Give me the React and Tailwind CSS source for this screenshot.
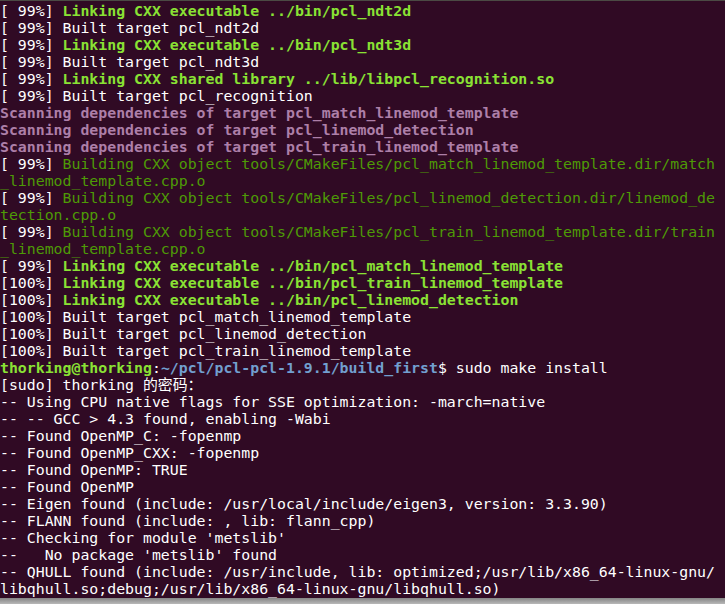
import React from "react";

const W = "text-[#ffffff]";
const G = "text-[#8ae234] font-bold";
const g = "text-[#4e9a06]";
const M = "text-[#ad7fa8] font-bold";
const B = "text-[#729fcf] font-bold";

const lines = [
  [["[ 99%] ", W], ["Linking CXX executable ../bin/pcl_ndt2d", G]],
  [["[ 99%] Built target pcl_ndt2d", W]],
  [["[ 99%] ", W], ["Linking CXX executable ../bin/pcl_ndt3d", G]],
  [["[ 99%] Built target pcl_ndt3d", W]],
  [["[ 99%] ", W], ["Linking CXX shared library ../lib/libpcl_recognition.so", G]],
  [["[ 99%] Built target pcl_recognition", W]],
  [["Scanning dependencies of target pcl_match_linemod_template", M]],
  [["Scanning dependencies of target pcl_linemod_detection", M]],
  [["Scanning dependencies of target pcl_train_linemod_template", M]],
  [["[ 99%] ", W], ["Building CXX object tools/CMakeFiles/pcl_match_linemod_template.dir/match", g]],
  [["_linemod_template.cpp.o", g]],
  [["[ 99%] ", W], ["Building CXX object tools/CMakeFiles/pcl_linemod_detection.dir/linemod_de", g]],
  [["tection.cpp.o", g]],
  [["[ 99%] ", W], ["Building CXX object tools/CMakeFiles/pcl_train_linemod_template.dir/train", g]],
  [["_linemod_template.cpp.o", g]],
  [["[ 99%] ", W], ["Linking CXX executable ../bin/pcl_match_linemod_template", G]],
  [["[100%] ", W], ["Linking CXX executable ../bin/pcl_train_linemod_template", G]],
  [["[100%] ", W], ["Linking CXX executable ../bin/pcl_linemod_detection", G]],
  [["[100%] Built target pcl_match_linemod_template", W]],
  [["[100%] Built target pcl_linemod_detection", W]],
  [["[100%] Built target pcl_train_linemod_template", W]],
  [["thorking@thorking", G], [":", W], ["~/pcl/pcl-pcl-1.9.1/build_first", B], ["$ sudo make install", W]],
  [["[sudo] thorking 的密码：", W]],
  [["-- Using CPU native flags for SSE optimization: -march=native", W]],
  [["-- -- GCC > 4.3 found, enabling -Wabi", W]],
  [["-- Found OpenMP_C: -fopenmp", W]],
  [["-- Found OpenMP_CXX: -fopenmp", W]],
  [["-- Found OpenMP: TRUE", W]],
  [["-- Found OpenMP", W]],
  [["-- Eigen found (include: /usr/local/include/eigen3, version: 3.3.90)", W]],
  [["-- FLANN found (include: , lib: flann_cpp)", W]],
  [["-- Checking for module 'metslib'", W]],
  [["--   No package 'metslib' found", W]],
  [["-- QHULL found (include: /usr/include, lib: optimized;/usr/lib/x86_64-linux-gnu/", W]],
  [["libqhull.so;debug;/usr/lib/x86_64-linux-gnu/libqhull.so)", W]],
];

export default function App() {
  return (
    <div className="w-[725px] h-[604px] flex flex-col bg-[#300a24] overflow-hidden">
      <div className="h-[1px] bg-[#4b4a44]" />
      <div className="h-[597px] overflow-hidden pt-[2px] font-['DejaVu_Sans_Mono','Noto_Sans_CJK_SC',monospace] text-[14.85px] leading-[17px] whitespace-pre">
        {lines.map((segs, i) => (
          <div key={i} className="h-[17px]">
            {segs.map(([t, c], j) => (
              <span key={j} className={c}>{t}</span>
            ))}
          </div>
        ))}
      </div>
      <div className="flex-1 bg-gradient-to-b from-[#858585] to-[#b8b8b8]" />
    </div>
  );
}
